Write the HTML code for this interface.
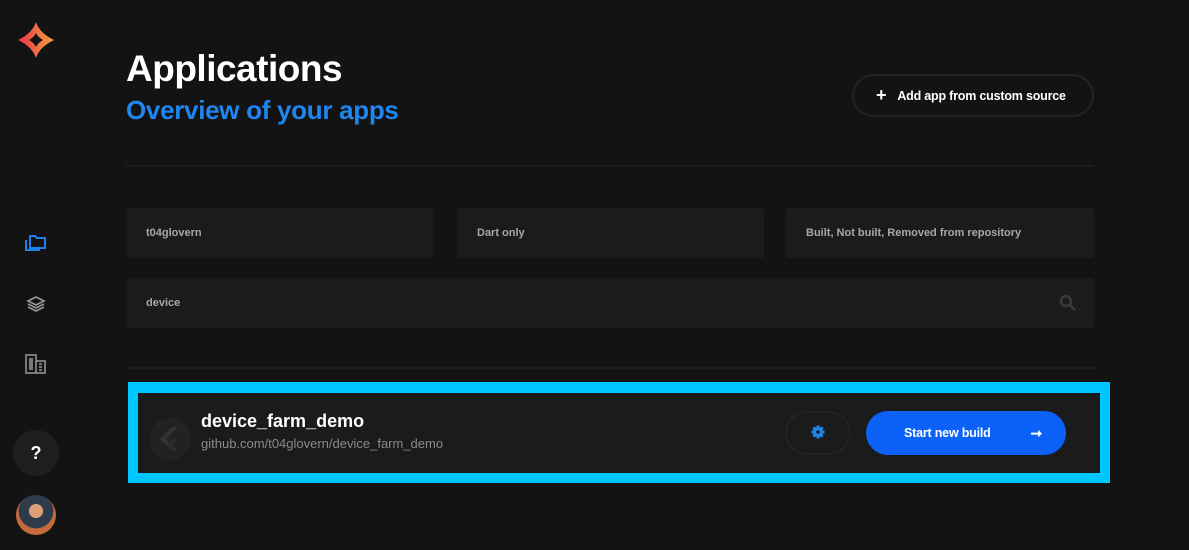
<!DOCTYPE html>
<html><head><meta charset="utf-8"><style>
*{margin:0;padding:0;box-sizing:border-box}
body{width:1189px;height:550px;background:#131313;font-family:"Liberation Sans",sans-serif;position:relative;overflow:hidden;color:#fff}
.abs{position:absolute}
.box{position:absolute;background:#1b1b1b;border-radius:3px;font-size:11px;color:#a8a8a8;font-weight:bold;padding-left:20px;display:flex;align-items:center}
</style></head><body>
<svg class="abs" style="left:17px;top:21px" width="38" height="38" viewBox="0 0 38 38"><defs><linearGradient id="g" x1="0" x2="1"><stop offset="0" stop-color="#e8324a"/><stop offset="1" stop-color="#f7a33a"/></linearGradient></defs><path d="M19 1 C22 9 27 14 37 19 C27 24 22 29 19 37 C16 29 11 24 1 19 C11 14 16 9 19 1Z M19 12 C17.5 15 15.5 17 12 19 C15.5 21 17.5 23 19 26 C20.5 23 22.5 21 26 19 C22.5 17 20.5 15 19 12Z" fill="url(#g)" fill-rule="evenodd"/></svg>
<svg class="abs" style="left:25px;top:234px" width="22" height="18" viewBox="0 0 22 18" fill="none" stroke="#1e7ff0" stroke-width="2"><path d="M1 6v10h14"/><path d="M5 2h5l2 2h8v10H5z"/></svg>
<svg class="abs" style="left:26px;top:296px" width="20" height="16" viewBox="0 0 20 16" fill="none" stroke="#999" stroke-width="1.6"><path d="M10 1l8 4-8 4-8-4z"/><path d="M2 8l8 4 8-4"/><path d="M2 11l8 4 8-4"/></svg>
<svg class="abs" style="left:25px;top:354px" width="22" height="20" viewBox="0 0 22 20" fill="none" stroke="#999" stroke-width="1.5"><rect x="1" y="1" width="10" height="18"/><path d="M11 7h9v12H11"/><path d="M5 4v12M7 4v12M14 10h3M14 13h3M14 16h3"/></svg>
<div class="abs" style="left:13px;top:430px;width:46px;height:46px;border-radius:50%;background:#1e1e1e;font-weight:bold;font-size:18px;text-align:center;line-height:46px">?</div>
<div class="abs" style="left:16px;top:495px;width:40px;height:40px;border-radius:50%;background:radial-gradient(circle at 50% 40%,#d9a07a 0 22%,#2d3b4a 23% 55%,#c46a3c 56%)"></div>

<div class="abs" style="left:126px;top:48px;font-size:37px;font-weight:bold;letter-spacing:-0.5px">Applications</div>
<div class="abs" style="left:126px;top:95px;font-size:26px;font-weight:bold;color:#1f86f0;letter-spacing:-0.3px">Overview of your apps</div>
<div class="abs" style="left:852px;top:74px;width:242px;height:43px;border:2px solid #232323;border-radius:22px;font-size:12.5px;font-weight:bold;display:flex;align-items:center;padding-left:22px;letter-spacing:-0.2px"><span style="font-size:18px;margin-right:11px">+</span>Add app from custom source</div>
<div class="abs" style="left:126px;top:165px;width:968px;height:2px;background:#1e1e1e"></div>
<div class="box" style="left:126px;top:208px;width:307px;height:50px">t04glovern</div>
<div class="box" style="left:457px;top:208px;width:307px;height:50px">Dart only</div>
<div class="box" style="left:786px;top:208px;width:308px;height:50px">Built, Not built, Removed from repository</div>
<div class="box" style="left:126px;top:278px;width:968px;height:50px">device</div>
<svg class="abs" style="left:1059px;top:294px" width="18" height="18" viewBox="0 0 18 18" fill="none" stroke="#3a3a3a" stroke-width="2.5"><circle cx="7" cy="7" r="5"/><path d="M11 11l5 5"/></svg>
<div class="abs" style="left:126px;top:367px;width:968px;height:2px;background:#1e1e1e"></div>

<div class="abs" style="left:128px;top:382px;width:982px;height:101px;background:#00c6ff"></div>
<div class="abs" style="left:138px;top:393px;width:962px;height:80px;background:#1b1b1b"></div>
<div class="abs" style="left:149px;top:418px;width:42px;height:42px;border-radius:50%;background:#222"></div>
<svg class="abs" style="left:160px;top:427px" width="20" height="24" viewBox="0 0 20 24" fill="#333"><path d="M12 0h6L6 12l6 6h-6L0 12z"/><path d="M12 12h6l-6 6 6 6h-6l-6-6z" fill="#2c2c2c"/></svg>
<div class="abs" style="left:201px;top:411px;font-size:18px;font-weight:bold">device_farm_demo</div>
<div class="abs" style="left:201px;top:436px;font-size:13px;color:#8a8a8a">github.com/t04glovern/device_farm_demo</div>
<div class="abs" style="left:785px;top:411px;width:66px;height:44px;border:2px solid #232323;border-radius:22px"></div>
<svg class="abs" style="left:811px;top:425px" width="14" height="14" viewBox="0 0 14 14"><g fill="#1f86f0"><circle cx="7" cy="7" r="4.6"/><rect x="5.5" y="0.5" width="3" height="13"/><rect x="0.5" y="5.5" width="13" height="3"/><rect x="5.5" y="0.5" width="3" height="13" transform="rotate(45 7 7)"/><rect x="5.5" y="0.5" width="3" height="13" transform="rotate(-45 7 7)"/></g><circle cx="7" cy="7" r="1.8" fill="#1b1b1b"/></svg>
<div class="abs" style="left:866px;top:411px;width:200px;height:44px;background:#0b61f8;border-radius:22px;font-size:12.5px;font-weight:bold;display:flex;align-items:center;padding-left:38px;letter-spacing:-0.2px">Start new build<span style="position:absolute;right:24px;font-size:14px">➞</span></div>
</body></html>
